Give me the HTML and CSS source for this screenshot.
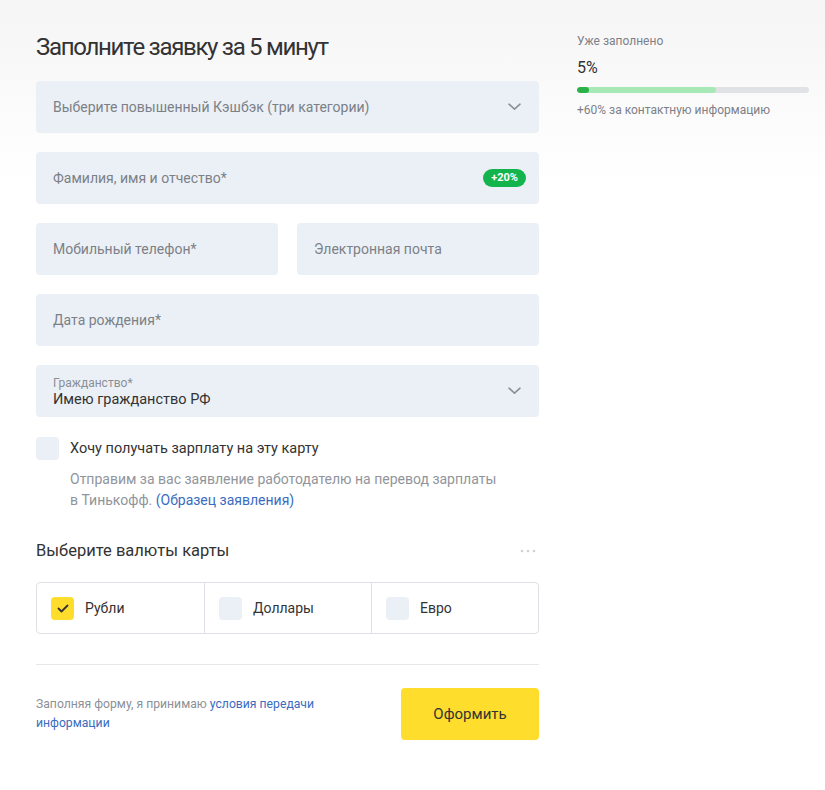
FILE: index.html
```html
<!DOCTYPE html>
<html lang="ru">
<head>
<meta charset="utf-8">
<title>Заявка</title>
<link rel="stylesheet" href="styles.css">
</head>
<body>
<div class="page">
  <main class="form">
    <h1 class="title">Заполните заявку за 5 минут</h1>
    <div class="fields">
      <div class="field select">
        <span class="ph">Выберите повышенный Кэшбэк (три категории)</span>
        <svg class="chev" width="13" height="8" viewBox="0 0 13 8"><path d="M1 1.2l5.5 5L12 1.2" fill="none" stroke="#8b9096" stroke-width="1.6" stroke-linecap="round" stroke-linejoin="round"/></svg>
      </div>
      <div class="field">
        <span class="ph">Фамилия, имя и отчество*</span>
        <span class="badge">+20%</span>
      </div>
      <div class="row2">
        <div class="field"><span class="ph">Мобильный телефон*</span></div>
        <div class="field"><span class="ph">Электронная почта</span></div>
      </div>
      <div class="field"><span class="ph">Дата рождения*</span></div>
      <div class="field select filled">
        <div class="fv">
          <span class="flabel">Гражданство*</span>
          <span class="fval">Имею гражданство РФ</span>
        </div>
        <svg class="chev" width="13" height="8" viewBox="0 0 13 8"><path d="M1 1.2l5.5 5L12 1.2" fill="none" stroke="#8b9096" stroke-width="1.6" stroke-linecap="round" stroke-linejoin="round"/></svg>
      </div>
    </div>

    <div class="salary">
      <div class="salary-row">
        <span class="cb"></span>
        <span class="salary-label">Хочу получать зарплату на эту карту</span>
      </div>
      <p class="salary-desc">Отправим за вас заявление работодателю на перевод зарплаты в&nbsp;Тинькофф. <a class="link">(Образец заявления)</a></p>
    </div>

    <div class="cur-head">
      <h2 class="cur-title">Выберите валюты карты</h2>
      <svg class="dots" width="16" height="4" viewBox="0 0 16 4"><circle cx="2" cy="2" r="1.3" fill="#cdd0d4"/><circle cx="8" cy="2" r="1.3" fill="#cdd0d4"/><circle cx="14" cy="2" r="1.3" fill="#cdd0d4"/></svg>
    </div>
    <div class="cur-box">
      <div class="cur-cell">
        <span class="cb checked"><svg width="12" height="9" viewBox="0 0 12 9"><path d="M1.5 4.5l3 3 6-6" fill="none" stroke="#333" stroke-width="1.8" stroke-linecap="round" stroke-linejoin="round"/></svg></span>
        <span class="cur-label">Рубли</span>
      </div>
      <div class="cur-cell">
        <span class="cb"></span>
        <span class="cur-label">Доллары</span>
      </div>
      <div class="cur-cell">
        <span class="cb"></span>
        <span class="cur-label">Евро</span>
      </div>
    </div>

    <hr class="divider">

    <div class="footer">
      <p class="terms">Заполняя форму, я принимаю <a class="link">условия передачи информации</a></p>
      <button class="submit">Оформить</button>
    </div>
  </main>

  <aside class="progress">
    <div class="p-label">Уже заполнено</div>
    <div class="p-value">5%</div>
    <div class="bar">
      <div class="bar-next" style="width:60%"></div>
      <div class="bar-fill" style="width:5%"></div>
    </div>
    <div class="p-hint">+60% за контактную информацию</div>
  </aside>
</div>
</body>
</html>
```

FILE: styles.css
```css
* { box-sizing: border-box; }
html, body { margin: 0; padding: 0; }
body {
  font-family: Roboto, "Noto Sans", "Liberation Sans", sans-serif;
  color: #333;
  background: linear-gradient(to bottom, #f5f5f6 0px, #ffffff 180px) no-repeat, #fff;
  min-height: 790px;
}
.page {
  display: flex;
  padding: 31px 0 0 36px;
}
.form {
  width: 503px;
  flex: none;
}
.title {
  margin: 0 0 18px;
  font-size: 24px;
  line-height: 32px;
  font-weight: 400;
  color: #333;
  letter-spacing: -1.3px;
}
.fields {
  display: flex;
  flex-direction: column;
  gap: 19px;
}
.row2 {
  display: flex;
  gap: 19px;
}
.row2 .field { flex: 1; }
.field {
  height: 52px;
  background: #ebf0f6;
  border-radius: 4px;
  display: flex;
  align-items: center;
  justify-content: space-between;
  padding: 0 17px;
}
.ph {
  font-size: 14px;
  color: #7c8087;
}
.chev { flex: none; margin-right: 1px; }
.badge {
  background: #13b44d;
  color: #fff;
  font-size: 11px;
  font-weight: 700;
  height: 18px;
  line-height: 18px;
  padding: 0 8px;
  border-radius: 9px;
  margin-right: -4px;
}
.fv { display: flex; flex-direction: column; }
.flabel { font-size: 12px; color: #8a8f96; line-height: 14px; margin-top: 3px; }
.fval { font-size: 14.5px; color: #333; line-height: 20px; }

.salary { margin-top: 20px; }
.salary-row {
  display: flex;
  align-items: center;
  gap: 11px;
}
.cb {
  width: 23px;
  height: 23px;
  border-radius: 4px;
  background: #ebf0f6;
  flex: none;
  display: flex;
  align-items: center;
  justify-content: center;
}
.cb.checked { background: #ffdd2d; }
.salary-label { font-size: 14.5px; color: #333; }
.salary-desc {
  margin: 9px 0 0 34px;
  width: 440px;
  font-size: 14px;
  line-height: 21px;
  color: #90959c;
}
.link { color: #3a6cc0; text-decoration: none; }

.cur-head {
  display: flex;
  align-items: center;
  justify-content: space-between;
  margin-top: 28px;
}
.cur-title {
  margin: 0;
  font-size: 16.5px;
  font-weight: 400;
  line-height: 24px;
  color: #333;
}
.dots { margin-right: 3px; }
.cur-box {
  margin-top: 19px;
  display: grid;
  grid-template-columns: 1fr 1fr 1fr;
  border: 1px solid #dde0e4;
  border-radius: 4px;
  height: 52px;
}
.cur-cell {
  display: flex;
  align-items: center;
  gap: 11px;
  padding-left: 14px;
}
.cur-cell + .cur-cell { border-left: 1px solid #dde0e4; }
.cur-label { font-size: 14px; color: #333; }

.divider {
  margin: 30px 0 0;
  border: 0;
  border-top: 1px solid #e6e7e9;
}
.footer {
  margin-top: 23px;
  display: flex;
  align-items: center;
  justify-content: space-between;
}
.terms {
  margin: 0;
  width: 300px;
  font-size: 12.2px;
  line-height: 19px;
  color: #8c9097;
}
.submit {
  width: 138px;
  height: 52px;
  border: 0;
  border-radius: 4px;
  background: #ffdd2d;
  font-family: inherit;
  font-size: 15px;
  color: #333;
}

.progress {
  margin-left: 38px;
  width: 232px;
  padding-top: 2px;
}
.p-label { font-size: 12px; line-height: 16px; color: #7c8087; }
.p-value { font-size: 16px; line-height: 20px; color: #333; margin-top: 9px; }
.bar {
  position: relative;
  margin-top: 9px;
  height: 6px;
  border-radius: 3px;
  background: #e0e2e5;
  overflow: hidden;
}
.bar-next, .bar-fill {
  position: absolute;
  left: 0; top: 0; bottom: 0;
  border-radius: 3px;
}
.bar-next { background: #a7e9b6; }
.bar-fill { background: #2ab248; }
.p-hint { font-size: 12px; line-height: 16px; color: #7c8087; margin-top: 9px; }
```
